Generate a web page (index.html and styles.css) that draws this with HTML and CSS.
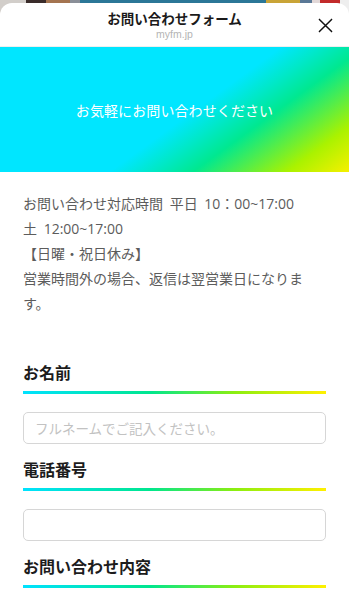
FILE: index.html
```html
<!DOCTYPE html>
<html lang="ja">
<head>
<meta charset="utf-8">
<meta name="viewport" content="width=device-width, initial-scale=1">
<title>お問い合わせフォーム</title>
<link rel="stylesheet" href="styles.css">
</head>
<body>
<div class="sheet">
  <header class="topbar">
    <div class="spacer"></div>
    <div class="titles">
      <div class="title">お問い合わせフォーム</div>
      <div class="domain">myfm.jp</div>
    </div>
    <button class="close" type="button" aria-label="閉じる">
      <svg viewBox="0 0 16 16" width="15" height="15" aria-hidden="true">
        <path d="M1.5 1.5 L14.5 14.5 M14.5 1.5 L1.5 14.5" stroke="#111" stroke-width="1.6" stroke-linecap="round" fill="none"/>
      </svg>
    </button>
  </header>
  <div class="banner">お気軽にお問い合わせください</div>
  <main class="content">
    <p class="info">お問い合わせ対応時間 平日 10：00~17:00<br>土 12:00~17:00<br>【日曜・祝日休み】<br>営業時間外の場合、返信は翌営業日になります。</p>
    <form class="form">
      <div class="field">
        <label class="label" for="name">お名前</label>
        <div class="bar"></div>
        <input class="input" id="name" type="text" placeholder="フルネームでご記入ください。">
      </div>
      <div class="field">
        <label class="label" for="tel">電話番号</label>
        <div class="bar"></div>
        <input class="input" id="tel" type="tel">
      </div>
      <div class="field">
        <label class="label" for="msg">お問い合わせ内容</label>
        <div class="bar"></div>
      </div>
    </form>
  </main>
</div>
</body>
</html>
```
FILE: styles.css
```css
* { box-sizing: border-box; }

html, body { margin: 0; padding: 0; }

body {
  font-family: "Noto Sans CJK JP", "Noto Sans", sans-serif;
  background:
    linear-gradient(90deg,
      #d2ceca 0 26px,
      #3a2c2a 26px 46px,
      #a47450 46px 70px,
      #8a8f98 70px 80px,
      #2b7797 80px 266px,
      #c9a437 266px 300px,
      #5a7896 300px 312px,
      #e2d8d8 312px 320px,
      #c22a2a 320px 340px,
      #eeeeee 340px) top left / 100% 14px no-repeat,
    #ffffff;
  overflow: hidden;
}

.sheet {
  margin-top: 3px;
  background: #ffffff;
  border-radius: 12px 12px 0 0;
  min-height: 590px;
  overflow: hidden;
}

.topbar {
  display: grid;
  grid-template-columns: 1fr auto 1fr;
  align-items: center;
  padding: 6px 16px 5px 16px;
  border-bottom: 1px solid #eeeeee;
}

.titles {
  text-align: center;
}

.title {
  font-size: 13.5px;
  line-height: 18px;
  font-weight: 700;
  color: #1a1a1a;
}

.domain {
  font-family: "Liberation Sans", Arial, sans-serif;
  font-size: 10.5px;
  line-height: 14px;
  color: #b4b4b4;
}

.close {
  justify-self: end;
  width: 15px;
  height: 15px;
  padding: 0;
  margin: 0;
  border: 0;
  background: transparent;
  display: flex;
  align-items: center;
  justify-content: center;
}

.close svg { display: block; }

.banner {
  height: 125px;
  display: flex;
  align-items: center;
  justify-content: center;
  color: #ffffff;
  font-size: 14px;
  letter-spacing: 0.1px;
  background: linear-gradient(144deg,
    #00e6ff 0%,
    #00e6ff 54%,
    #00e8c8 62%,
    #00e890 70%,
    #aaf200 88%,
    #f6f000 100%);
}

.content {
  padding: 0 23px;
}

.info {
  margin: 0;
  padding-top: 19px;
  font-family: "Open Sans", "Noto Sans CJK JP", sans-serif;
  font-size: 14px;
  line-height: 25px;
  word-spacing: 3px;
  color: #5c5c5c;
}

.form {
  margin-top: 45px;
}

.field + .field {
  margin-top: 14px;
}

.label {
  display: block;
  font-size: 16px;
  line-height: 22px;
  font-weight: 700;
  color: #1c1c1c;
}

.bar {
  height: 3px;
  margin-top: 8px;
  background: linear-gradient(90deg, #00e2ff 0%, #00e68e 42%, #8cee10 70%, #fff000 100%);
}

.input {
  display: block;
  width: 100%;
  height: 32px;
  margin-top: 18px;
  padding: 0 11px;
  border: 1px solid #d6d6d6;
  border-radius: 5px;
  background: #ffffff;
  font-family: "Noto Sans CJK JP", sans-serif;
  font-size: 13.5px;
  color: #333;
  outline: none;
}

.input::placeholder {
  color: #c2c2c2;
}
```
